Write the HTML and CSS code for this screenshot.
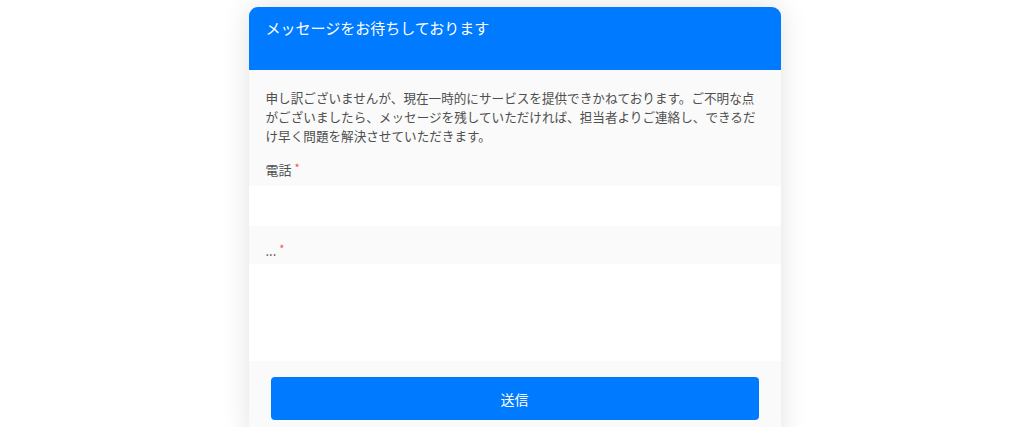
FILE: index.html
```html
<!DOCTYPE html>
<html lang="ja">
<head>
<meta charset="utf-8">
<link rel="stylesheet" href="styles.css">
</head>
<body>
<div class="page">
  <div class="card">
    <div class="card-header">メッセージをお待ちしております</div>
    <div class="card-body">
      <p class="intro">申し訳ございませんが、現在一時的にサービスを提供できかねております。ご不明な点がございましたら、メッセージを残していただければ、担当者よりご連絡し、できるだけ早く問題を解決させていただきます。</p>
      <label class="field-label">電話<span class="req">*</span></label>
      <div class="input"></div>
      <label class="field-label dots">...<span class="req">*</span></label>
      <div class="textarea"></div>
      <div class="actions">
        <button class="submit">送信</button>
      </div>
    </div>
  </div>
</div>
</body>
</html>
```

FILE: styles.css
```css
html, body {
  margin: 0;
  padding: 0;
  background: #ffffff;
  height: 427px;
  overflow: hidden;
  font-family: "Noto Sans CJK JP", "Noto Sans", sans-serif;
}
.page {
  display: flex;
  justify-content: center;
  padding: 7px 0 0 5px;
}
.card {
  width: 532px;
  border-radius: 9px 9px 0 0;
  background: #fafafa;
  box-shadow: 0 0 28px rgba(0, 0, 0, 0.12);
  overflow: hidden;
}
.card-header {
  height: 63px;
  box-sizing: border-box;
  background: #007bff;
  color: #ffffff;
  font-size: 15px;
  line-height: 22px;
  padding: 10px 17px 0;
}
.card-body {
  display: flex;
  flex-direction: column;
  padding-bottom: 20px;
}
.intro {
  margin: 0;
  padding: 18px 17px 0;
  font-size: 12.6px;
  line-height: 19px;
  color: #4f4f4f;
}
.field-label {
  display: block;
  padding: 0 17px;
  font-size: 13px;
  line-height: 20px;
  color: #4f4f4f;
  margin-top: 12px;
  margin-bottom: 6px;
}
.field-label.dots {
  margin-top: 12px;
  margin-bottom: 3px;
}
.req {
  color: #f0504f;
  font-size: 11px;
  margin-left: 3px;
  vertical-align: 3px;
}
.input {
  height: 40px;
  background: #ffffff;
}
.textarea {
  height: 97px;
  background: #ffffff;
}
.actions {
  padding: 16px 22px 0;
}
.submit {
  display: block;
  width: 100%;
  height: 43px;
  border: none;
  border-radius: 4px;
  background: #007bff;
  color: #ffffff;
  font-family: "Noto Sans CJK JP", sans-serif;
  font-size: 14px;
}
```
